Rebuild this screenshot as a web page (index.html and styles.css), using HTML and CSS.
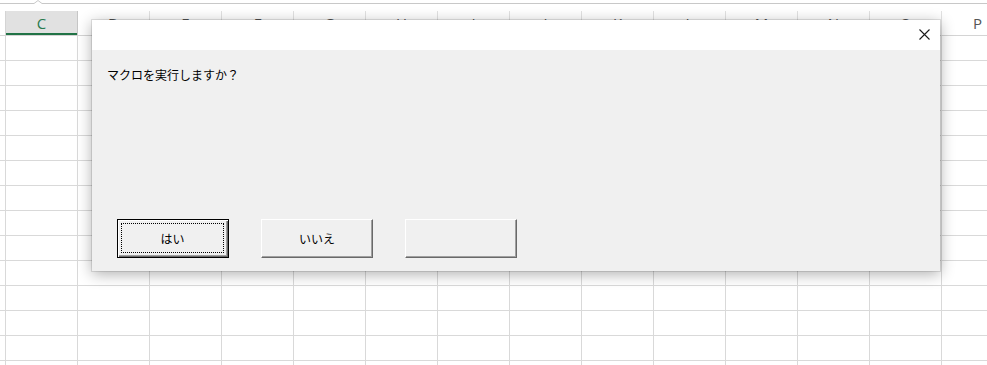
FILE: index.html
```html
<!DOCTYPE html>
<html lang="ja">
<head>
<meta charset="utf-8">
<title>マクロの実行</title>
<link rel="stylesheet" href="styles.css">
</head>
<body>

<div class="sheet">
  <svg class="topline" width="987" height="5" viewBox="0 0 987 5">
    <path d="M0 3.5 H34 L38 0.5 L42 3.5 H987" fill="none" stroke="#c8c8c8" stroke-width="1"/>
  </svg>

  <div class="colheads">
    <div class="colhead edge"></div>
    <div class="colhead sel">C</div>
    <div class="colhead">D</div>
    <div class="colhead">E</div>
    <div class="colhead">F</div>
    <div class="colhead">G</div>
    <div class="colhead">H</div>
    <div class="colhead">I</div>
    <div class="colhead">J</div>
    <div class="colhead">K</div>
    <div class="colhead">L</div>
    <div class="colhead">M</div>
    <div class="colhead">N</div>
    <div class="colhead">O</div>
    <div class="colhead">P</div>
  </div>

  <div class="cells"></div>
</div>

<!-- the message box floats over the worksheet -->
<div class="msgbox">
  <div class="titlebar">
    <svg class="close" width="11" height="11" viewBox="0 0 11 11">
      <path d="M0.5 0.5 L10.5 10.5 M10.5 0.5 L0.5 10.5" stroke="#1a1a1a" stroke-width="1.1"/>
    </svg>
  </div>
  <div class="msgbody">
    <p class="prompt">マクロを実行しますか？</p>
    <div class="buttons">
      <button class="btn default"><span class="focus">はい</span></button>
      <button class="btn">いいえ</button>
      <button class="btn"></button>
    </div>
  </div>
</div>

</body>
</html>
```

FILE: styles.css
```css
html, body { margin: 0; padding: 0; }
body { width: 987px; height: 365px; overflow: hidden; background: #fff;
  font-family: "Noto Sans", "Liberation Sans", sans-serif; }

.sheet { width: 987px; height: 365px; overflow: hidden; }
.topline { display: block; margin-bottom: 6px; }

/* column header row */
.colheads { display: flex; height: 24px; border-bottom: 1px solid #d4d4d4;
  white-space: nowrap; }
.colhead { flex: 0 0 71px; border-right: 1px solid #e2e2e2;
  text-align: center; font-family: "Open Sans", "Noto Sans", sans-serif;
  font-size: 15px; line-height: 24px; color: #555; }
.colhead.edge { flex-basis: 5px; border-right-color: #d4d4d4; }
.colhead.sel { background: #e1e1e1; color: #2a7a4d;
  box-shadow: inset 0 -2px 0 #217346; border-right-color: #c6c6c6; }

/* worksheet gridlines */
.cells { height: 340px;
  background-image:
    linear-gradient(to right, transparent 71px, #d9d9d9 71px),
    linear-gradient(to bottom, transparent 24px, #d9d9d9 24px);
  background-size: 72px 25px, 72px 25px;
  background-position: 6px 0, 0 0; }

/* message box */
.msgbox { position: absolute; left: 92px; top: 20px; width: 848px; height: 251px;
  background: #f0f0f0; display: flex; flex-direction: column;
  box-shadow: 0 0 0 1px rgba(0,0,0,0.10), 0 3px 14px rgba(0,0,0,0.32);
  font-family: "Noto Sans CJK JP", "Noto Sans", sans-serif; font-size: 12px; color: #000; }
.titlebar { height: 30px; background: #fff; display: flex; justify-content: flex-end;
  align-items: flex-start; padding: 9px 10px 0 0; box-sizing: border-box; }
.close { display: block; }

.msgbody { flex: 1; display: flex; flex-direction: column; padding: 0 0 13px 25px; }
.prompt { margin: 17px 0 0 -10px; line-height: 16px; }

.buttons { margin-top: auto; display: flex; gap: 32px; }
.btn { width: 112px; height: 39px; padding: 0; margin: 0; background: #f0f0f0;
  font: inherit; color: #000; border: 1px solid; border-color: #fff #696969 #696969 #fff;
  box-shadow: inset -1px -1px 0 #a0a0a0; display: flex; align-items: center;
  justify-content: center; }
.btn.default { border: 1px solid #000;
  box-shadow: inset 1px 1px 0 #fff, inset -1px -1px 0 #696969, inset -2px -2px 0 #a0a0a0;
  padding: 3px 4px 4px 3px; }
.focus { flex: 1; align-self: stretch; display: flex; align-items: center;
  justify-content: center; border: 1px dotted #000; }
```
